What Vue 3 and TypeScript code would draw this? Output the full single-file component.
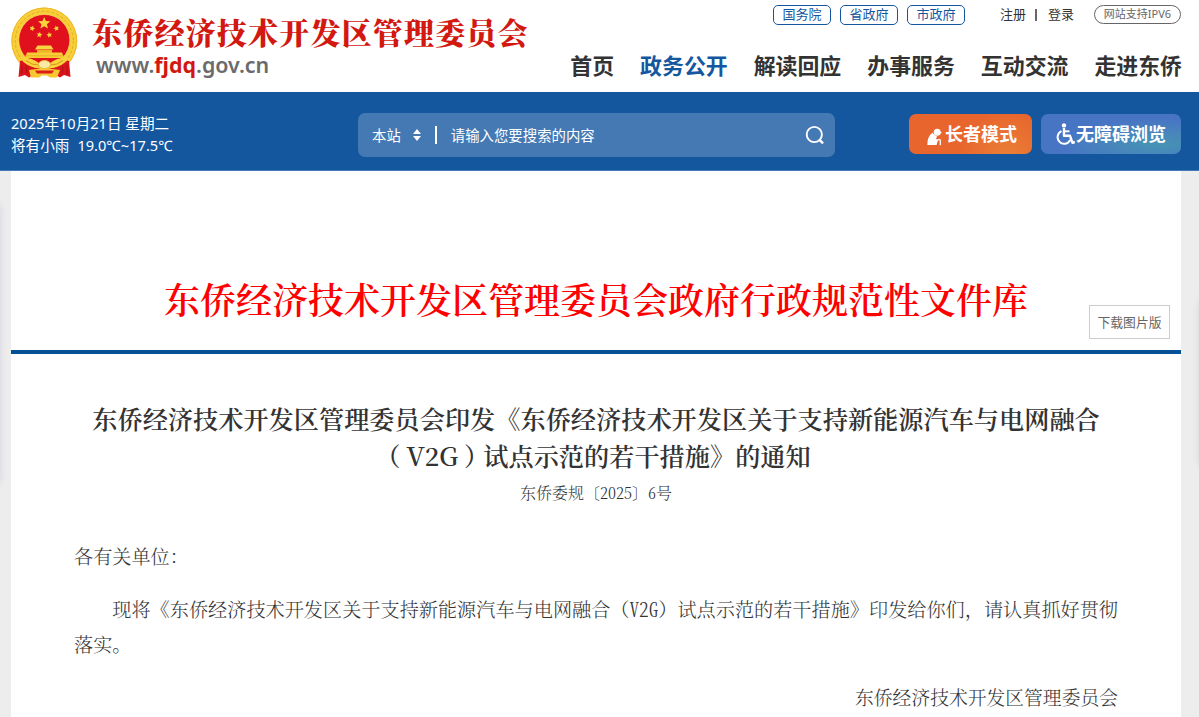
<script setup lang="ts">
interface NavItem {
  label: string
  active?: boolean
}

const govLinks: string[] = ['国务院', '省政府', '市政府']
const nav: NavItem[] = [
  { label: '首页' },
  { label: '政务公开', active: true },
  { label: '解读回应' },
  { label: '办事服务' },
  { label: '互动交流' },
  { label: '走进东侨' },
]
const star = (cx: number, cy: number, r: number, turn = 0): string =>
  Array.from({ length: 10 }, (_, i) => {
    const a = -Math.PI / 2 + turn + (i * Math.PI) / 5
    const d = i % 2 ? r * 0.45 : r
    return `${(cx + d * Math.cos(a)).toFixed(2)},${(cy + d * Math.sin(a)).toFixed(2)}`
  }).join(' ')
const stars: string[] = [
  star(33.2, 16.3, 6.4),
  star(21.2, 21.4, 3, 0.3),
  star(28.4, 27.8, 3.1, 0.2),
  star(38.4, 28, 3.1, -0.2),
  star(45.4, 21.4, 3, -0.3),
]
</script>

<template>
  <div class="page">
    <header class="header">
      <div class="brand">
        <svg class="emblem" viewBox="0 0 68 72" width="68" height="72">
          <ellipse cx="33.3" cy="34" rx="33" ry="33.6" fill="#f8cf3a" />
          <ellipse cx="33.3" cy="34" rx="29" ry="29.6" fill="none" stroke="#e6ab22" stroke-width="1" stroke-dasharray="3 2" />
          <ellipse cx="33.3" cy="34" rx="32.4" ry="33" fill="none" stroke="#edb829" stroke-width="1" />
          <circle cx="33.3" cy="33" r="25.6" fill="#e0101c" stroke="#f9dc55" stroke-width=".8" />
          <path d="M9 54 Q14 52 19 55 L24 61 H43 L48 55 Q53 52 58 54 L59.5 70 L53 68 L49 70.5 L43 67 H24 L18 70.5 L14 68 L7.5 70Z" fill="#d9151b" />
          <polygon v-for="p in stars" :key="p" :points="p" fill="#fbd23b" />
          <path d="M26.5 38.5 H40 L42.5 42.5 H24Z" fill="#f9d640" />
          <path d="M26 43 H41 V46 H26Z" fill="#eeb225" />
          <path d="M16 45.5 H51 L53 51 H14Z" fill="#f8cc35" />
          <path d="M14 48.8 H53" stroke="#e3a520" stroke-width=".7" />
          <path d="M9 51 Q20 50 28 56 L33.5 53 L39 56 Q47 50 58 51 Q52 60 39 61.5 L33.5 63 L28 61.5 Q15 60 9 51Z" fill="#f9d23c" />
          <path d="M15 53.5 Q21 58.5 28 58 M52 53.5 Q46 58.5 39 58" fill="none" stroke="#d8941d" stroke-width="1" />
          <ellipse cx="33.5" cy="57.5" rx="6" ry="4" fill="#fbeaa6" stroke="#e8b52d" stroke-width="1" />
          <path d="M18 63 Q33 60 49 63 L46 70.5 H39 L36 68.5 H31 L28 70.5 H20Z" fill="#f6c730" />
          <path d="M24 63.5 H43 L41 66.5 H26Z" fill="#dd1a1e" />
          <path d="M11 58 L11 67 M15 59 L16 66 M56 58 L56 67 M52 59 L51 66" stroke="#a90e15" stroke-width=".9" />
        </svg>
        <div class="brand-text">
          <div class="brand-name">东侨经济技术开发区管理委员会</div>
          <div class="brand-url">www.<b>fjdq</b>.gov.cn</div>
        </div>
      </div>
      <div class="header-right">
        <div class="top-links">
          <a v-for="g in govLinks" :key="g" class="gov">{{ g }}</a>
          <span class="account"><a>注册</a><i></i><a>登录</a></span>
          <span class="ipv6">网站支持IPV6</span>
        </div>
        <nav class="nav">
          <a v-for="n in nav" :key="n.label" :class="{ active: n.active }">{{ n.label }}</a>
        </nav>
      </div>
    </header>

    <section class="bar">
      <div class="weather">
        <div>2025年10月21日 星期二</div>
        <div class="forecast"><span>将有小雨</span><span>19.0℃~17.5℃</span></div>
      </div>
      <div class="search">
        <span class="scope">本站</span>
        <svg class="sort" width="8" height="12" viewBox="0 0 8 12"><path d="M4 0 L8 5 H0Z M0 7 H8 L4 12Z" fill="#fff" /></svg>
        <i class="divider"></i>
        <span class="hint">请输入您要搜索的内容</span>
        <svg class="lens" width="20" height="20" viewBox="0 0 20 20" fill="none" stroke="#fff"><circle cx="9.3" cy="9.5" r="7.6" stroke-width="1.9" /><path d="M14.5 14.8 L18 18.3" stroke-width="2.4" /></svg>
      </div>
      <div class="modes">
        <a class="mode elder">
          <svg width="15" height="18" viewBox="0 0 15 18" fill="#fff">
            <circle cx="10.2" cy="4.2" r="3.5" /><path d="M7.5 2.8 L15 4.5 L13 6 L8 5Z" />
            <path d="M5.3 4.8 Q7.5 7.6 10 8.2 L9 11 L11 12 L9.5 17 H.4 Q0 9 5.3 4.8Z" />
            <path d="M9 12.5 Q14 10.5 13.3 13 V17.3" fill="none" stroke="#fff" stroke-width="1.3" />
          </svg><span>长者模式</span></a>
        <a class="mode access">
          <svg width="20" height="22" viewBox="0 0 20 22" fill="none" stroke="#fff">
            <circle cx="8" cy="2.4" r="2.2" fill="#fff" stroke="none" />
            <path d="M8 5 V12.8 H14 L16.5 19.8 L18.8 19" stroke-width="2.4" stroke-linejoin="round" />
            <path d="M8 8.3 H13.5" stroke-width="1.9" />
            <path d="M5.5 8.2 A6.6 6.6 0 1 0 14.2 17" stroke-width="2" />
          </svg><span>无障碍浏览</span></a>
      </div>
    </section>

    <main class="sheet">
      <div class="banner">
        <h1>东侨经济技术开发区管理委员会政府行政规范性文件库</h1>
        <a class="download">下载图片版</a>
      </div>
      <article>
        <h2>东侨经济技术开发区管理委员会印发《东侨经济技术开发区关于支持新能源汽车与电网融合<br /><span class="open">（</span>V2G<span class="close">）</span>试点示范的若干措施》的通知</h2>
        <div class="doc-no">东侨委规〔2025〕6号</div>
        <p class="salute">各有关单位：</p>
        <p class="body">现将《东侨经济技术开发区关于支持新能源汽车与电网融合（<span class="latin">V2G</span>）试点示范的若干措施》印发给你们，请认真抓好贯彻<br />落实。</p>
        <p class="sign">东侨经济技术开发区管理委员会</p>
      </article>
    </main>
    <i class="edge edge-left"></i>
    <i class="edge edge-right"></i>
  </div>
</template>

<style>
html,
body {
  overflow: hidden;
}
</style>

<style scoped>
.page {
  position: relative;
  width: 1199px;
  height: 717px;
  overflow: hidden;
  background: #ededed;
  font-family: "Noto Sans", "Noto Sans CJK SC", sans-serif;
  color: #333;
}
.edge {
  position: absolute;
  width: 10px;
  border-radius: 6px;
}
.edge-left {
  left: -11px;
  top: 204px;
  height: 280px;
  box-shadow: 0 0 8px 0 rgba(120, 130, 190, 0.28);
}
.edge-right {
  right: -12px;
  top: 300px;
  height: 166px;
  box-shadow: 0 0 10px 0 rgba(0, 0, 0, 0.16);
}
.header {
  box-sizing: border-box;
  height: 92px;
  padding: 0 18px 0 11px;
  background: #fff;
  display: flex;
  justify-content: space-between;
}
.brand {
  display: flex;
  padding-top: 7px;
}
.emblem {
  flex: none;
}
.brand-text {
  padding: 9px 0 0 13px;
}
.brand-name {
  height: 37px;
  font: 900 30px/30px "Noto Serif CJK SC", "Noto Sans CJK SC", serif;
  letter-spacing: 1.2px;
  color: #d2180f;
  white-space: nowrap;
}
.brand-url {
  font: 600 21.4px/24px "Noto Sans", sans-serif;
  color: #6b6b6b;
  padding-left: 4px;
}
.brand-url b {
  font-weight: 700;
  color: #d2180f;
}
.header-right {
  display: flex;
  flex-direction: column;
  align-items: flex-end;
}
.top-links {
  display: flex;
  align-items: flex-start;
  padding-top: 5px;
  height: 22px;
}
.gov {
  box-sizing: border-box;
  width: 58px;
  height: 20px;
  margin-right: 9px;
  border: 1px solid #15579f;
  border-radius: 5px;
  color: #15579f;
  text-align: center;
  font-size: 13px;
  line-height: 17px;
}
.account {
  display: flex;
  height: 20px;
  margin: 0 20px 0 26px;
  font-size: 13px;
  line-height: 18px;
}
.account i {
  width: 2px;
  height: 12px;
  margin: 4px 11px 0 9px;
  background: #666;
}
.ipv6 {
  box-sizing: border-box;
  width: 87px;
  height: 19px;
  border: 1px solid #666;
  border-radius: 10px;
  font-size: 11px;
  line-height: 15px;
  text-align: center;
  color: #666;
}
.nav {
  display: flex;
  gap: 26px;
  padding-top: 22px;
  margin-right: -1px;
  font: 700 21.9px/32px "Noto Sans CJK SC", sans-serif;
}
.nav .active {
  color: #15579f;
}
.bar {
  box-sizing: border-box;
  height: 79px;
  padding: 21px 18px 0 11px;
  background: #15579f;
  border-bottom: 1px solid #4579b3;
  display: flex;
  align-items: flex-start;
  color: #fff;
  font-size: 14.4px;
}
.weather {
  width: 347px;
  margin-top: -1px;
  font-size: 14.6px;
  line-height: 22px;
}
.forecast {
  display: flex;
  gap: 8px;
}
.search {
  box-sizing: border-box;
  width: 477px;
  height: 44px;
  padding: 0 10px 0 14px;
  border-radius: 7px;
  background: #4579b3;
  display: flex;
  align-items: center;
}
.scope,
.hint {
  padding-bottom: 2px;
}
.sort {
  margin-left: 12px;
}
.divider {
  width: 2px;
  height: 18px;
  margin: 0 14px;
  background: #fff;
}
.hint {
  flex: 1;
}
.modes {
  display: flex;
  gap: 9px;
  margin: 1px 0 0 74px;
}
.mode {
  box-sizing: border-box;
  height: 40px;
  border-radius: 7px;
  display: flex;
  align-items: center;
  font-weight: 700;
  font-size: 18px;
  white-space: nowrap;
}
.mode span {
  padding-bottom: 2px;
}
.elder {
  width: 123px;
  padding-left: 18px;
  gap: 3px;
  background: radial-gradient(circle at 80% 110%, #e98036 0, #e8652e 45%);
}
.elder svg {
  margin-top: 5px;
}
.access {
  width: 140px;
  padding-left: 15px;
  background: radial-gradient(ellipse at 82% 75%, #4794b4 0, #4874c4 60%);
}
.sheet {
  width: 1170px;
  height: 546px;
  margin-left: 11px;
  background: #fff;
}
.banner {
  box-sizing: border-box;
  height: 183px;
  border-bottom: 4px solid #045295;
  position: relative;
}
h1 {
  margin: 0;
  padding-top: 102px;
  font: 600 36px/52px "Noto Serif CJK SC", "Noto Sans CJK SC", serif;
  color: #f00;
  text-align: center;
}
.download {
  position: absolute;
  right: 11px;
  bottom: 11px;
  box-sizing: border-box;
  width: 81px;
  height: 34px;
  border: 1px solid #ccc;
  font-size: 12.8px;
  line-height: 33px;
  text-align: center;
  color: #666;
}
article {
  padding: 46px 63px 0;
}
h2 {
  margin: 0 -20px;
  font: 600 25.2px/37px "Noto Serif CJK SC", "Noto Sans CJK SC", serif;
  text-align: center;
  white-space: nowrap;
}
.open {
  margin: 0 6px 0 -6px;
}
.close {
  margin: 0 -6px 0 6px;
}
.doc-no {
  margin-top: 7px;
  font: 300 16px/24px "Noto Serif CJK SC", "Noto Sans CJK SC", serif;
  font-feature-settings: "hwid";
  text-align: center;
}
p {
  margin: 0;
  font: 300 19.16px/35px "Noto Serif CJK SC", "Noto Sans CJK SC", serif;
  white-space: nowrap;
}
.salute {
  margin-top: 33px;
}
.body {
  margin-top: 18px;
  text-indent: 2em;
}
.latin {
  font-feature-settings: "hwid";
}
.sign {
  margin-top: 18px;
  text-align: right;
  font-size: 18.8px;
}
</style>
